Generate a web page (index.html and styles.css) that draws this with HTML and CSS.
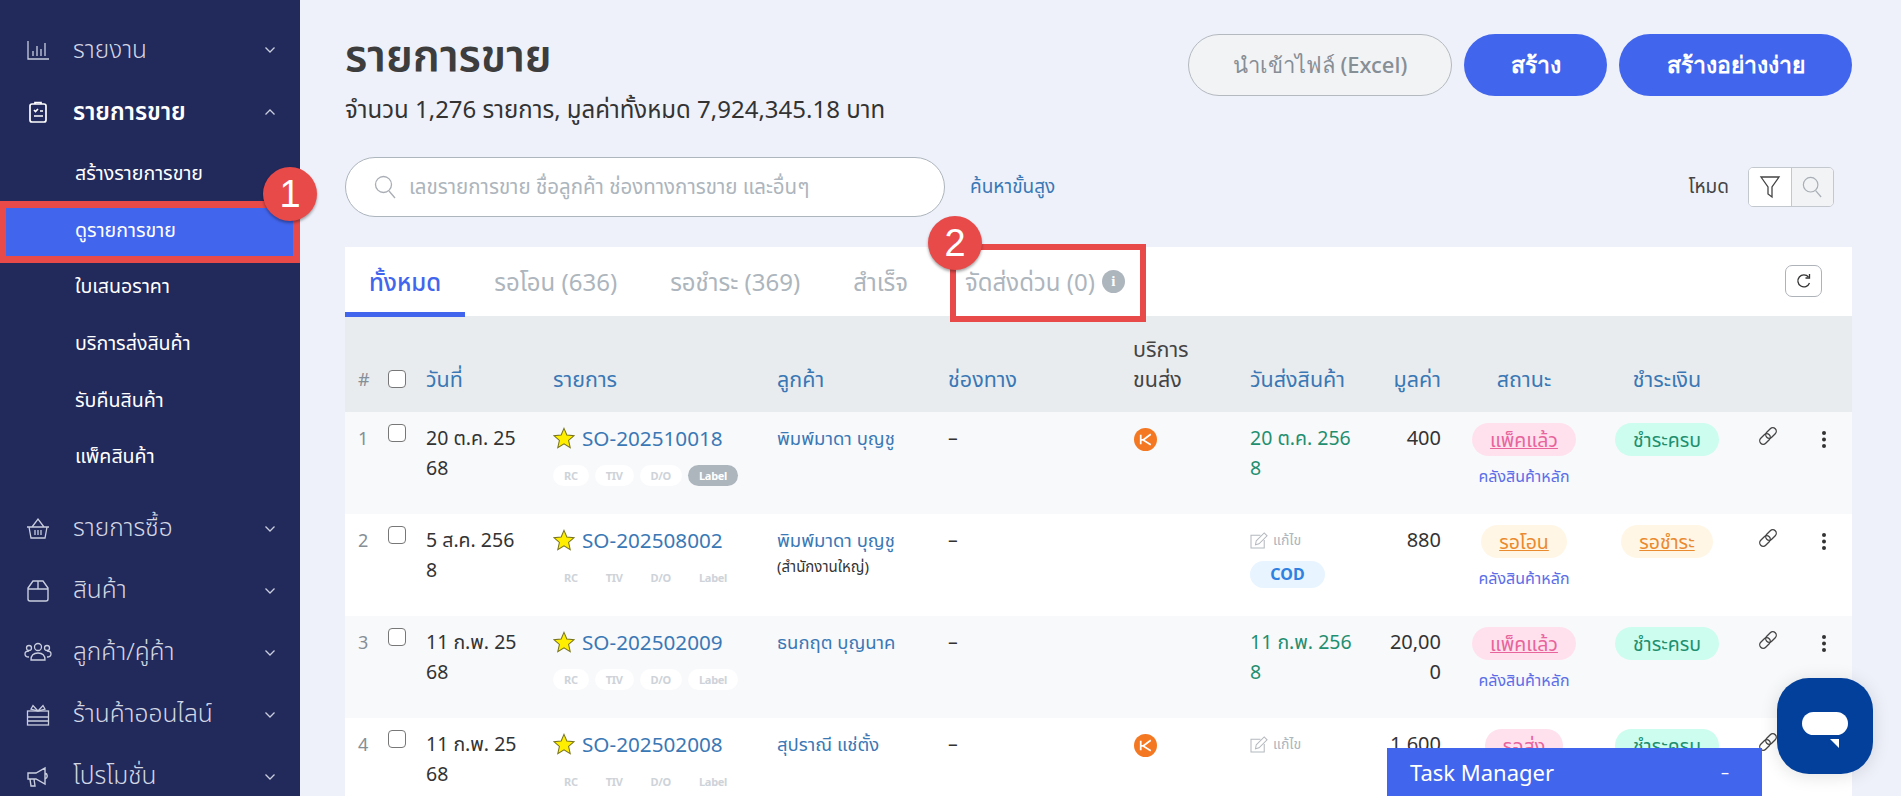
FILE: index.html
```html
<!DOCTYPE html>
<html lang="th">
<head>
<meta charset="utf-8">
<title>รายการขาย</title>
<link rel="stylesheet" href="styles.css">
</head>
<body>
<svg class="sprite" width="0" height="0">
  <defs>
    <symbol id="star" viewBox="0 0 24 24"><path d="M12 1.500l3.100 7.300 7.900.7-6 5.200 1.800 7.800L12 18.400l-6.800 4.100L7 14.700l-6-5.200 7.900-.7z" fill="#ffee00" stroke="#77731c" stroke-width="1.100"/></symbol>
    <symbol id="clink" viewBox="0 0 20 20"><g fill="none" stroke="#444" stroke-width="1.300"><rect x="1" y="9.500" width="12" height="7" rx="3.500" transform="rotate(-45 7 13)"/><rect x="7" y="3.500" width="12" height="7" rx="3.500" transform="rotate(-45 13 7)"/></g></symbol>
    <symbol id="dots" viewBox="0 0 6 20"><circle cx="3" cy="4" r="2" fill="#333"/><circle cx="3" cy="10.500" r="2" fill="#333"/><circle cx="3" cy="17" r="2" fill="#333"/></symbol>
    <symbol id="chev" viewBox="0 0 12 8"><path d="M1.500 1.500L6 6l4.500-4.500" fill="none" stroke="#c9cede" stroke-width="1.300"/></symbol>
    <symbol id="kerry" viewBox="0 0 24 24"><circle cx="12" cy="12" r="12" fill="#f47722"/><path d="M7 7v10M7 12.500h3M17.500 6.500l-8 6 8 5" fill="none" stroke="#fff" stroke-width="1.800"/></symbol>
    <symbol id="edit" viewBox="0 0 20 18"><g fill="none" stroke="#b4b9bf" stroke-width="1.100"><path d="M11 3.500H1v13.500h14V8.500"/><path d="M6.500 9.500L15 1l3 3-8.500 8.500-3.700 1z"/></g></symbol>
    <symbol id="loupe" viewBox="0 0 22 24"><g fill="none" stroke="#a9aeb5" stroke-width="1.300"><circle cx="9.500" cy="9.500" r="8"/><path d="M15 16l6 7"/></g></symbol>
  </defs>
</svg>
<div class="app">
  <nav class="sidebar">
    <a class="nav-top"><svg class="nav-ico" viewBox="0 0 24 24"><path d="M2 3v18h21M7 18v-5M11 18V8M15 18v-7M19 18V5" fill="none" stroke="#c9cede" stroke-width="1.300"/></svg><span class="nav-label">รายงาน</span><svg class="nav-chev"><use href="#chev"/></svg></a>
    <a class="nav-top is-open"><svg class="nav-ico" viewBox="0 0 24 24"><g fill="none" stroke="#fff" stroke-width="1.700"><rect x="4" y="4" width="16" height="18" rx="2"/><path d="M9 4V2.500h6V4M8 10l1.500 1.500L12 9M14 11h3M8 16h9"/></g></svg><span class="nav-label">รายการขาย</span><svg class="nav-chev nav-chev-up"><use href="#chev"/></svg></a>
    <div class="nav-sub">
      <a class="nav-item">สร้างรายการขาย</a>
      <a class="nav-item is-active">ดูรายการขาย</a>
      <a class="nav-item">ใบเสนอราคา</a>
      <a class="nav-item">บริการส่งสินค้า</a>
      <a class="nav-item">รับคืนสินค้า</a>
      <a class="nav-item">แพ็คสินค้า</a>
    </div>
    <a class="nav-top"><svg class="nav-ico" viewBox="0 0 24 24"><g fill="none" stroke="#c9cede" stroke-width="1.300"><path d="M1 10h22M3 10l2 11h14l2-11M6 10l6-8 6 8M9 13v5M12 13v5M15 13v5"/></g></svg><span class="nav-label">รายการซื้อ</span><svg class="nav-chev"><use href="#chev"/></svg></a>
    <a class="nav-top"><svg class="nav-ico" viewBox="0 0 24 24"><g fill="none" stroke="#c9cede" stroke-width="1.400"><path d="M7 2h10l5 7v11a2 2 0 0 1-2 2H4a2 2 0 0 1-2-2V9zM2 10h20M12 2v8"/></g></svg><span class="nav-label">สินค้า</span><svg class="nav-chev"><use href="#chev"/></svg></a>
    <a class="nav-top"><svg class="nav-ico nav-ico-wide" viewBox="0 0 28 24"><g fill="none" stroke="#c9cede" stroke-width="1.300"><circle cx="14" cy="6" r="3.500"/><circle cx="5" cy="7" r="2.500"/><circle cx="23" cy="7" r="2.500"/><path d="M7 19c0-5 3-7 7-7s7 2 7 7zM5 16c-3 0-4-1-4-3s2-3 4-3M23 16c3 0 4-1 4-3s-2-3-4-3"/></g></svg><span class="nav-label">ลูกค้า/คู่ค้า</span><svg class="nav-chev"><use href="#chev"/></svg></a>
    <a class="nav-top"><svg class="nav-ico" viewBox="0 0 24 24"><g fill="none" stroke="#c9cede" stroke-width="1.300"><rect x="1.500" y="8" width="21" height="14"/><path d="M1.500 14h21M1.500 18h21M12 8L7 2.500 5 6l7 2 7-2-2-3.500z"/></g></svg><span class="nav-label">ร้านค้าออนไลน์</span><svg class="nav-chev"><use href="#chev"/></svg></a>
    <a class="nav-top"><svg class="nav-ico" viewBox="0 0 24 24"><g fill="none" stroke="#c9cede" stroke-width="1.400"><path d="M2 8h8l9-5v16l-9-5H2zM19 8c3 1 3 5 0 6M4 14l1 7h4l-1-7"/></g></svg><span class="nav-label">โปรโมชั่น</span><svg class="nav-chev"><use href="#chev"/></svg></a>
  </nav>

  <main class="main">
    <header class="page-head">
      <div>
        <h1 class="title">รายการขาย</h1>
        <p class="summary">จำนวน 1,276 รายการ, มูลค่าทั้งหมด 7,924,345.18 บาท</p>
      </div>
      <div class="actions">
        <button class="btn btn-ghost">นำเข้าไฟล์ (Excel)</button>
        <button class="btn btn-primary btn-create">สร้าง</button>
        <button class="btn btn-primary btn-easy">สร้างอย่างง่าย</button>
      </div>
    </header>

    <div class="toolbar">
      <div class="search">
        <svg class="search-ico"><use href="#loupe"/></svg>
        <span class="search-text">เลขรายการขาย ชื่อลูกค้า ช่องทางการขาย และอื่นๆ</span>
      </div>
      <a class="adv-link">ค้นหาขั้นสูง</a>
      <span class="mode-label">โหมด</span>
      <div class="mode-toggle">
        <span class="mode-btn mode-on"><svg width="22" height="26" viewBox="0 0 22 26"><path d="M2 3h18l-7 10v10l-4-3v-7z" fill="none" stroke="#444" stroke-width="1.300"/></svg></span>
        <span class="mode-btn"><svg width="20" height="22"><use href="#loupe"/></svg></span>
      </div>
    </div>

    <section class="card">
      <div class="tabs">
        <a class="tab tab-active">ทั้งหมด</a>
        <a class="tab">รอโอน (636)</a>
        <a class="tab">รอชำระ (369)</a>
        <a class="tab">สำเร็จ</a>
        <a class="tab tab-info">จัดส่งด่วน (0) <span class="info-dot">i</span></a>
        <button class="refresh"><svg width="18" height="18" viewBox="0 0 18 18"><path d="M13.500 5A6 6 0 1 0 14.500 11" fill="none" stroke="#333" stroke-width="1.300"/><path d="M14.500 2v4h-4" fill="none" stroke="#333" stroke-width="1.300"/></svg></button>
      </div>
      <table class="orders">
        <colgroup>
          <col class="c-num"><col class="c-chk"><col class="c-date"><col class="c-item"><col class="c-cust"><col class="c-chan"><col class="c-ship"><col class="c-sdate"><col class="c-val"><col class="c-stat"><col class="c-pay"><col class="c-link"><col class="c-more">
        </colgroup>
        <thead>
          <tr>
            <th class="num">#</th><th><span class="check"></span></th><th>วันที่</th><th>รายการ</th><th>ลูกค้า</th><th>ช่องทาง</th><th class="th-dark">บริการ<br>ขนส่ง</th><th>วันส่งสินค้า</th><th class="right">มูลค่า</th><th class="center">สถานะ</th><th class="center">ชำระเงิน</th><th></th><th></th>
          </tr>
        </thead>
        <tbody>
          <tr class="odd">
            <td class="num">1</td><td><span class="check"></span></td><td>20 ต.ค. 25<br>68</td>
            <td><div class="so"><svg class="star"><use href="#star"/></svg><a>SO-202510018</a></div><div class="tags"><span class="tag">RC</span><span class="tag">TIV</span><span class="tag">D/O</span><span class="tag tag-on">Label</span></div></td>
            <td class="cust">พิมพ์มาดา บุญชู</td><td>–</td><td><svg class="kerry"><use href="#kerry"/></svg></td><td class="green">20 ต.ค. 256<br>8</td><td class="right val">400</td>
            <td class="center"><span class="pill pill-pink">แพ็คแล้ว</span><div class="wh">คลังสินค้าหลัก</div></td><td class="center"><span class="pill pill-green">ชำระครบ</span></td>
            <td class="center"><svg class="ico-link"><use href="#clink"/></svg></td><td><svg class="ico-dots"><use href="#dots"/></svg></td>
          </tr>
          <tr>
            <td class="num">2</td><td><span class="check"></span></td><td>5 ส.ค. 256<br>8</td>
            <td><div class="so"><svg class="star"><use href="#star"/></svg><a>SO-202508002</a></div><div class="tags"><span class="tag">RC</span><span class="tag">TIV</span><span class="tag">D/O</span><span class="tag">Label</span></div></td>
            <td class="cust">พิมพ์มาดา บุญชู<div class="branch">(สำนักงานใหญ่)</div></td><td>–</td><td></td><td><div class="edit"><svg class="ico-edit"><use href="#edit"/></svg>แก้ไข</div><span class="cod">COD</span></td><td class="right val">880</td>
            <td class="center"><span class="pill pill-amber">รอโอน</span><div class="wh">คลังสินค้าหลัก</div></td><td class="center"><span class="pill pill-amber">รอชำระ</span></td>
            <td class="center"><svg class="ico-link"><use href="#clink"/></svg></td><td><svg class="ico-dots"><use href="#dots"/></svg></td>
          </tr>
          <tr class="odd">
            <td class="num">3</td><td><span class="check"></span></td><td>11 ก.พ. 25<br>68</td>
            <td><div class="so"><svg class="star"><use href="#star"/></svg><a>SO-202502009</a></div><div class="tags"><span class="tag">RC</span><span class="tag">TIV</span><span class="tag">D/O</span><span class="tag">Label</span></div></td>
            <td class="cust">ธนกฤต บุญนาค</td><td>–</td><td></td><td class="green">11 ก.พ. 256<br>8</td><td class="right val">20,00<br>0</td>
            <td class="center"><span class="pill pill-pink">แพ็คแล้ว</span><div class="wh">คลังสินค้าหลัก</div></td><td class="center"><span class="pill pill-green">ชำระครบ</span></td>
            <td class="center"><svg class="ico-link"><use href="#clink"/></svg></td><td><svg class="ico-dots"><use href="#dots"/></svg></td>
          </tr>
          <tr>
            <td class="num">4</td><td><span class="check"></span></td><td>11 ก.พ. 25<br>68</td>
            <td><div class="so"><svg class="star"><use href="#star"/></svg><a>SO-202502008</a></div><div class="tags"><span class="tag">RC</span><span class="tag">TIV</span><span class="tag">D/O</span><span class="tag">Label</span></div></td>
            <td class="cust">สุปราณี แช่ตั้ง</td><td>–</td><td><svg class="kerry"><use href="#kerry"/></svg></td><td><div class="edit"><svg class="ico-edit"><use href="#edit"/></svg>แก้ไข</div></td><td class="right val">1,600</td>
            <td class="center"><span class="pill pill-pink">รอส่ง</span></td><td class="center"><span class="pill pill-green">ชำระครบ</span></td>
            <td class="center"><svg class="ico-link"><use href="#clink"/></svg></td><td><svg class="ico-dots"><use href="#dots"/></svg></td>
          </tr>
        </tbody>
      </table>
    </section>
  </main>

  <div class="mark mark-nav"></div>
  <div class="mark mark-tab"></div>
  <div class="step step-1">1</div>
  <div class="step step-2">2</div>

  <div class="chat"><svg width="46" height="36" viewBox="0 0 46 36"><rect x="0" y="0" width="46" height="23" rx="11.500" fill="#fff"/><path d="M28 27h9v9z" fill="#fff"/></svg></div>
  <div class="task"><span>Task Manager</span><span class="task-min">–</span></div>
</div>
</body>
</html>
```
FILE: styles.css
```css
* { box-sizing: border-box; }
html, body { margin: 0; height: 100%; overflow: hidden; }
body { font-family: "Noto Sans", "Noto Sans Thai", "Open Sans", sans-serif; color: #333; background: #eef1fa; }
a { color: inherit; text-decoration: none; }
.sprite { position: absolute; }
.app { position: relative; display: flex; width: 1901px; height: 796px; overflow: hidden; }

/* sidebar */
.sidebar { flex: 0 0 300px; height: 796px; padding-top: 19px; background: #22295b; color: #d3d7e4; overflow: hidden; }
.nav-top { display: flex; align-items: center; height: 62px; padding-left: 26px; font-size: 24.500px; font-weight: 300; }
.nav-ico { flex: 0 0 24px; width: 24px; height: 24px; }
.nav-ico-wide { flex-basis: 28px; width: 28px; margin: 0 -2px; }
.nav-label { flex: 1; margin-left: 23px; }
.nav-chev { flex: 0 0 12px; width: 12px; height: 8px; margin-right: 24px; }
.nav-chev-up { transform: rotate(180deg); }
.is-open { color: #fff; font-size: 24px; font-weight: 600; }
.nav-sub { padding: 3px 0 12px; }
.nav-item { display: flex; align-items: center; height: 56.6px; padding-left: 75px; font-size: 19.600px; font-weight: 400; color: #fff; }
.is-active { background: #4265ed; }

/* main */
.main { flex: 1; min-width: 0; padding: 34px 49px 0 45px; }
.page-head { display: flex; justify-content: space-between; height: 123px; }
.title { margin: -4px 0 0; font-size: 44px; line-height: 48px; font-weight: 600; color: #3d3d3d; }
.summary { margin: 14px 0 0; font-size: 24px; line-height: 34px; font-weight: 400; color: #333; }
.actions { display: flex; gap: 12px; }
.btn { height: 62px; border-radius: 31px; border: 0; font: 600 23px "Noto Sans", sans-serif; color: #fff; }
.btn-ghost { width: 264px; background: #f2f3f5; border: 1px solid #b4b9c0; font-size: 22px; font-weight: 500; color: #868e96; }
.btn-primary { background: #4265ed; }
.btn-create { width: 143px; }
.btn-easy { width: 233px; }

.toolbar { display: flex; align-items: center; height: 60px; }
.search { display: flex; align-items: center; width: 600px; height: 60px; padding-left: 28px; background: #fff; border: 1px solid #adb5bd; border-radius: 30px; }
.search-ico { width: 22px; height: 24px; }
.search-text { margin-left: 13px; font-size: 20.500px; color: #adb5bd; }
.adv-link { margin-left: 25px; font-size: 19px; font-weight: 400; color: #3a78b5; }
.mode-label { margin-left: auto; font-size: 19px; color: #444; }
.mode-toggle { display: flex; width: 86px; height: 40px; margin-left: 19px; margin-right: 18px; border: 1px solid #c3c8ce; border-radius: 5px; overflow: hidden; }
.mode-btn { flex: 1; display: flex; align-items: center; justify-content: center; background: #f1f3f5; }
.mode-on { background: #fff; border-right: 1px solid #c3c8ce; }

.card { margin-top: 30px; background: #fff; }
.tabs { position: relative; display: flex; align-items: center; height: 69px; font-size: 24px; color: #adb5bd; padding-left: 24px; gap: 53px; }
.tab { line-height: 69px; white-space: nowrap; display: flex; align-items: center; gap: 7px; }
.tab-active { position: relative; color: #4265ed; font-weight: 500; }
.tab-active::after { content: ""; position: absolute; left: -24px; right: -24px; bottom: -1px; height: 5px; background: #4265ed; }
.tab-info { margin-left: 4px; }
.info-dot { display: inline-flex; align-items: center; justify-content: center; width: 23px; height: 23px; border-radius: 50%; background: #adb5bd; color: #fff; font: 700 15px "Liberation Serif", serif; }
.refresh { position: absolute; right: 30px; top: 18px; display: flex; align-items: center; justify-content: center; width: 37px; height: 32px; padding: 0; background: #fff; border: 1px solid #aeb3b9; border-radius: 7px; }

/* table */
.orders { width: 1507px; table-layout: fixed; border-collapse: collapse; }
.c-num { width: 43px; } .c-chk { width: 38px; } .c-date { width: 127px; } .c-item { width: 224px; } .c-cust { width: 171px; } .c-chan { width: 185px; }
.c-ship { width: 117px; } .c-sdate { width: 135px; } .c-val { width: 56px; } .c-stat { width: 166px; } .c-pay { width: 120px; } .c-link { width: 82px; } .c-more { width: 43px; }
.orders th { height: 96px; padding: 0 0 18px; background: #e9ecef; font-size: 21.500px; line-height: 30px; font-weight: 400; text-align: left; vertical-align: bottom; color: #3a78b5; }
.orders th.th-dark { color: #444; }
.orders td { height: 102px; padding: 11px 0 0; font-size: 19.500px; line-height: 30px; vertical-align: top; color: #333; white-space: nowrap; }
.odd td { background: #f8f9fb; }
.orders .num { padding-left: 13px; color: #868e96; font-size: 18px; }
.orders .right { text-align: right; }
.orders .center { text-align: center; }
.orders td.val { font-size: 20px; }
.orders td.green { color: #1f8f6f; }
.orders td.cust { color: #3a78b5; font-size: 18.500px; }
.branch { font-size: 15px; line-height: 22px; color: #333; }
.check { display: block; width: 18px; height: 18px; margin-top: 1px; border: 1px solid #777; border-radius: 4px; background: #fff; }
.orders th .check { margin-bottom: 6px; }
.so { display: flex; align-items: center; gap: 7px; height: 30px; font-size: 20.700px; color: #3a78b5; }
.star { width: 22px; height: 22px; }
.tags { display: flex; gap: 6px; margin-top: 12px; height: 21px; }
.tag { padding: 0 11px; border-radius: 11px; background: #fff; font-size: 11px; line-height: 21px; font-weight: 700; letter-spacing: -.3px; color: #ced3d9; }
.tag-on { background: #adb5bd; color: #fff; }
.kerry { display: block; width: 23px; height: 23px; margin: 5px 0 0 1px; }
.edit { display: flex; align-items: center; gap: 4px; height: 30px; font-size: 14px; color: #adb5bd; }
.ico-edit { width: 19px; height: 17px; }
.cod { display: inline-block; width: 75px; height: 27px; margin-top: 6px; border-radius: 14px; background: #e8f4ff; color: #2f80e0; font-size: 16px; font-weight: 700; line-height: 27px; text-align: center; }
.pill { display: inline-block; height: 33px; padding: 0 18px; border-radius: 17px; font-size: 19.500px; line-height: 33px; }
.pill-pink { background: #ffe1ee; color: #e8649c; text-decoration: underline; }
.pill-amber { background: #fff6e5; color: #ea8a2f; text-decoration: underline; }
.pill-green { background: #ccfdee; color: #1f8f6f; }
.wh { margin-top: 8px; font-size: 16px; line-height: 24px; color: #5b6ee8; }
.ico-link { width: 20px; height: 20px; margin-top: 3px; }
.ico-dots { display: block; width: 6px; height: 20px; margin: 6px 0 0 12px; }

/* overlays */
.mark { position: absolute; border: 6px solid #e84a4a; }
.mark-nav { left: 0; top: 201px; width: 300px; height: 62px; border-width: 7px 7px 7px 6px; }
.mark-tab { left: 950px; top: 244px; width: 196px; height: 78px; }
.step { position: absolute; width: 54px; height: 54px; border-radius: 50%; background: #e84a4a; box-shadow: 0 2px 3px rgba(0,0,0,.35); color: #fff; font: 400 38px/54px "Liberation Sans", sans-serif; text-align: center; }
.step-1 { left: 263px; top: 167px; }
.step-2 { left: 928px; top: 216px; }
.chat { position: absolute; left: 1777px; top: 678px; display: flex; align-items: flex-start; justify-content: center; width: 96px; height: 96px; padding-top: 34px; border-radius: 32px; background: #03409b; box-shadow: 0 2px 18px rgba(0,0,0,.12); }
.task { position: absolute; left: 1387px; top: 748px; display: flex; justify-content: space-between; align-items: center; width: 375px; height: 48px; padding: 0 33px 0 23px; background: #4265ed; color: #fff; font-size: 22px; font-weight: 400; }
.task-min { font-size: 16px; }
```
